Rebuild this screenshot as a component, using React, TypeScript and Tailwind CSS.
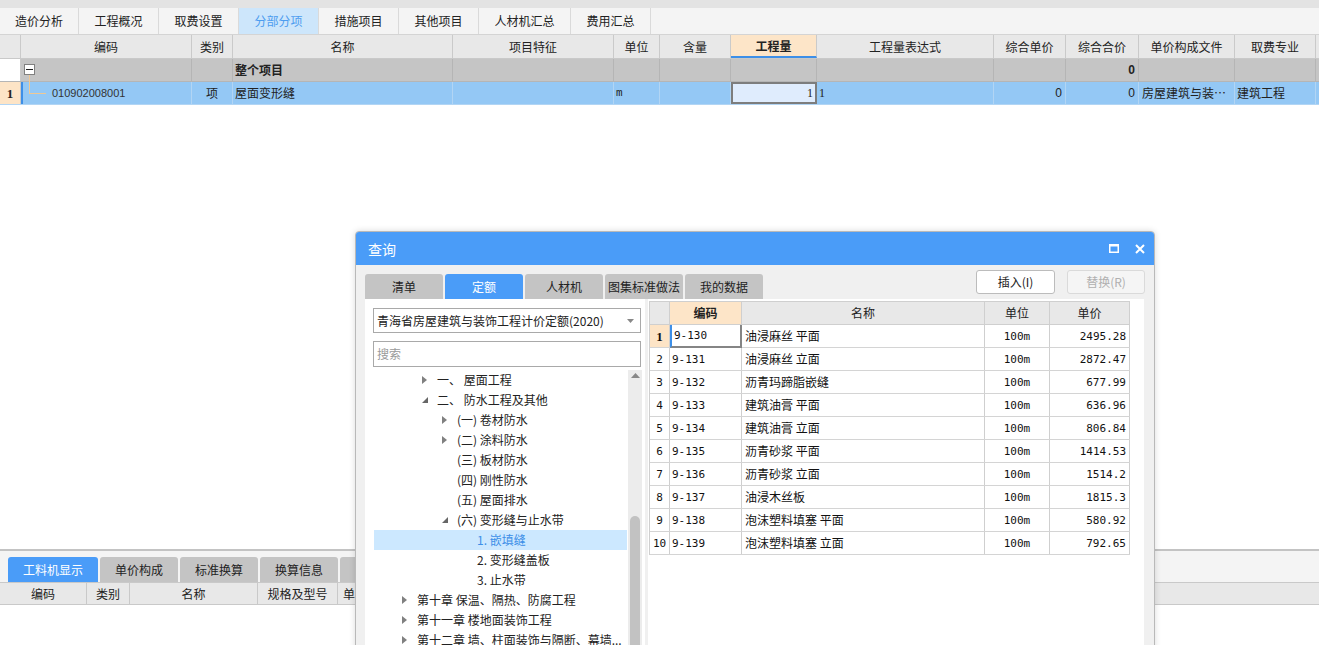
import React from 'react';

const topTabs = [
  { label: '造价分析', w: 'w-[79px]' },
  { label: '工程概况', w: 'w-[80px]' },
  { label: '取费设置', w: 'w-[80px]' },
  { label: '分部分项', w: 'w-[80px]', active: true },
  { label: '措施项目', w: 'w-[80px]' },
  { label: '其他项目', w: 'w-[80px]' },
  { label: '人材机汇总', w: 'w-[92px]' },
  { label: '费用汇总', w: 'w-[80px]' },
];

const cols = [
  { w: 'w-[21px]', t: '' },
  { w: 'w-[171px]', t: '编码' },
  { w: 'w-[41px]', t: '类别' },
  { w: 'w-[220px]', t: '名称' },
  { w: 'w-[161px]', t: '项目特征' },
  { w: 'w-[46px]', t: '单位' },
  { w: 'w-[71px]', t: '含量' },
  { w: 'w-[86px]', t: '工程量', hl: true },
  { w: 'w-[177px]', t: '工程量表达式' },
  { w: 'w-[72px]', t: '综合单价' },
  { w: 'w-[73px]', t: '综合合价' },
  { w: 'w-[96px]', t: '单价构成文件' },
  { w: 'w-[81px]', t: '取费专业' },
];

const quotas = [
  ['9-130', '油浸麻丝 平面', '2495.28'],
  ['9-131', '油浸麻丝 立面', '2872.47'],
  ['9-132', '沥青玛蹄脂嵌缝', '677.99'],
  ['9-133', '建筑油膏 平面', '636.96'],
  ['9-134', '建筑油膏 立面', '806.84'],
  ['9-135', '沥青砂浆 平面', '1414.53'],
  ['9-136', '沥青砂浆 立面', '1514.2'],
  ['9-137', '油浸木丝板', '1815.3'],
  ['9-138', '泡沫塑料填塞 平面', '580.92'],
  ['9-139', '泡沫塑料填塞 立面', '792.65'],
];

type TreeItem = { pl: string; arrow?: 'right' | 'down'; text: string; sel?: boolean };

const tree: TreeItem[] = [
  { pl: 'pl-[48px]', arrow: 'right', text: '一、 屋面工程' },
  { pl: 'pl-[48px]', arrow: 'down', text: '二、 防水工程及其他' },
  { pl: 'pl-[68px]', arrow: 'right', text: '(一) 卷材防水' },
  { pl: 'pl-[68px]', arrow: 'right', text: '(二) 涂料防水' },
  { pl: 'pl-[68px]', text: '(三) 板材防水' },
  { pl: 'pl-[68px]', text: '(四) 刚性防水' },
  { pl: 'pl-[68px]', text: '(五) 屋面排水' },
  { pl: 'pl-[68px]', arrow: 'down', text: '(六) 变形缝与止水带' },
  { pl: 'pl-[88px]', text: '1. 嵌填缝', sel: true },
  { pl: 'pl-[88px]', text: '2. 变形缝盖板' },
  { pl: 'pl-[88px]', text: '3. 止水带' },
  { pl: 'pl-[28px]', arrow: 'right', text: '第十章 保温、隔热、防腐工程' },
  { pl: 'pl-[28px]', arrow: 'right', text: '第十一章 楼地面装饰工程' },
  { pl: 'pl-[28px]', arrow: 'right', text: '第十二章 墙、柱面装饰与隔断、幕墙...' },
];

const Arrow = ({ dir }: { dir?: 'right' | 'down' }) => (
  <span className="w-[15px] shrink-0 flex items-center">
    {dir === 'right' && (
      <svg width="5" height="8" viewBox="0 0 5 8">
        <path d="M0 0 L5 4 L0 8 Z" fill="#808080" />
      </svg>
    )}
    {dir === 'down' && (
      <svg width="6" height="6" viewBox="0 0 6 6">
        <path d="M6 0 L6 6 L0 6 Z" fill="#666" />
      </svg>
    )}
  </span>
);

const App: React.FC = () => {
  return (
    <div className="relative w-[1319px] h-[645px] overflow-hidden bg-white flex flex-col text-[12px] text-[#222] font-['Noto_Sans_CJK_SC','Noto_Sans',sans-serif] leading-none">
      {/* top strip */}
      <div className="h-[8px] shrink-0 bg-[#e3e3e3]" />

      {/* main tabs */}
      <div className="h-[27px] shrink-0 flex bg-[#f4f4f4] border-b border-[#d4d4d4]">
        {topTabs.map(t => (
          <div
            key={t.label}
            className={`${t.w} shrink-0 flex items-center justify-center border-r border-[#dadada] ${t.active ? 'bg-[#cde6fb] text-[#4d9df0]' : 'text-[#222]'}`}
          >
            {t.label}
          </div>
        ))}
      </div>

      {/* table header */}
      <div className="h-[24px] shrink-0 flex bg-[#e8e8e8] border-b border-[#c9c9c9]">
        {cols.map((c, i) => (
          <div
            key={i}
            className={`${c.w} shrink-0 flex items-center justify-center border-r border-[#cacaca] text-[12px] ${c.hl ? 'bg-[#fde5c8] font-bold border-b-2 border-b-[#3d8fe8]' : ''}`}
          >
            {c.t}
          </div>
        ))}
        <div className="flex-1" />
      </div>

      {/* group row */}
      <div className="h-[23px] shrink-0 flex bg-[#c5c5c5] border-b border-[#b5b5b5]">
        <div className="w-[21px] shrink-0 bg-white border-r border-[#c9c9c9]" />
        <div className="w-[171px] shrink-0 border-r border-[#b5b5b5] relative">
          <div className="absolute left-[3px] top-[5px] w-[11px] h-[11px] bg-white border border-[#808080] flex items-center justify-center">
            <div className="w-[7px] h-[1px] bg-[#222]" />
          </div>
          <div className="absolute left-[8px] top-[16px] w-[1px] h-[18px] bg-[#efc894]" />
        </div>
        <div className="w-[41px] shrink-0 border-r border-[#b5b5b5]" />
        <div className="w-[220px] shrink-0 border-r border-[#b5b5b5] flex items-center pl-[2px] font-bold">整个项目</div>
        <div className="w-[161px] shrink-0 border-r border-[#b5b5b5]" />
        <div className="w-[46px] shrink-0 border-r border-[#b5b5b5]" />
        <div className="w-[71px] shrink-0 border-r border-[#b5b5b5]" />
        <div className="w-[86px] shrink-0 border-r border-[#b5b5b5]" />
        <div className="w-[177px] shrink-0 border-r border-[#b5b5b5]" />
        <div className="w-[72px] shrink-0 border-r border-[#b5b5b5]" />
        <div className="w-[73px] shrink-0 border-r border-[#b5b5b5] flex items-center justify-end pr-[3px] font-bold font-['Liberation_Sans',sans-serif]">0</div>
        <div className="w-[96px] shrink-0 border-r border-[#b5b5b5]" />
        <div className="w-[81px] shrink-0 border-r border-[#b5b5b5]" />
        <div className="flex-1" />
      </div>

      {/* item row */}
      <div className="h-[23px] shrink-0 flex bg-[#94c8f5] border-b border-[#b2d5f4]">
        <div className="w-[21px] shrink-0 bg-[#fde4c6] border-r border-[#c9c9c9] flex items-center justify-center font-bold font-['Liberation_Serif',serif] text-[13px]">1</div>
        <div className="w-[171px] shrink-0 border-r border-[#b2d5f4] border-l-2 border-l-[#3d8fe8] relative flex items-center">
          <div className="absolute left-[6px] top-0 w-[1px] h-[11px] bg-[#efc894]" />
          <div className="absolute left-[6px] top-[11px] w-[17px] h-[1px] bg-[#efc894]" />
          <span className="pl-[29px] font-['Liberation_Sans',sans-serif] text-[11px] text-[#333]">010902008001</span>
        </div>
        <div className="w-[41px] shrink-0 border-r border-[#b2d5f4] flex items-center justify-center">项</div>
        <div className="w-[220px] shrink-0 border-r border-[#b2d5f4] flex items-center pl-[2px]">屋面变形缝</div>
        <div className="w-[161px] shrink-0 border-r border-[#b2d5f4]" />
        <div className="w-[46px] shrink-0 border-r border-[#b2d5f4] flex items-center pl-[2px] text-[11px] font-['Liberation_Mono',monospace]">m</div>
        <div className="w-[71px] shrink-0 border-r border-[#b2d5f4]" />
        <div className="w-[86px] shrink-0 bg-[#dfecfd] border-2 border-[#7d7d7d] flex items-center justify-end pr-[2px] font-['Liberation_Serif',serif] text-[12px]">1</div>
        <div className="w-[177px] shrink-0 border-r border-[#b2d5f4] flex items-center pl-[2px] font-['Liberation_Serif',serif] text-[12px]">1</div>
        <div className="w-[72px] shrink-0 border-r border-[#b2d5f4] flex items-center justify-end pr-[3px] font-['Liberation_Sans',sans-serif]">0</div>
        <div className="w-[73px] shrink-0 border-r border-[#b2d5f4] flex items-center justify-end pr-[3px] font-['Liberation_Sans',sans-serif]">0</div>
        <div className="w-[96px] shrink-0 border-r border-[#b2d5f4] flex items-center pl-[3px] whitespace-nowrap">房屋建筑与装…</div>
        <div className="w-[81px] shrink-0 border-r border-[#b2d5f4] flex items-center pl-[2px]">建筑工程</div>
        <div className="flex-1" />
      </div>

      <div className="flex-1" />

      {/* bottom panel */}
      <div className="h-[96px] shrink-0 flex flex-col border-t-2 border-[#c3c3c3]">
        <div className="h-[31px] shrink-0 bg-[#f4f4f4] flex items-end pl-[8px] gap-[2px]">
          <div className="w-[90px] h-[25px] rounded-t-[3px] bg-[#4a9cf8] text-white flex items-center justify-center">工料机显示</div>
          <div className="w-[78px] h-[25px] rounded-t-[3px] bg-[#c4c4c4] flex items-center justify-center">单价构成</div>
          <div className="w-[78px] h-[25px] rounded-t-[3px] bg-[#c4c4c4] flex items-center justify-center">标准换算</div>
          <div className="w-[78px] h-[25px] rounded-t-[3px] bg-[#c4c4c4] flex items-center justify-center">换算信息</div>
          <div className="w-[78px] h-[25px] rounded-t-[3px] bg-[#c4c4c4]" />
        </div>
        <div className="h-[23px] shrink-0 flex bg-[#e8e8e8] border-y border-[#c9c9c9]">
          <div className="w-[87px] shrink-0 border-r border-[#c9c9c9] flex items-center justify-center">编码</div>
          <div className="w-[43px] shrink-0 border-r border-[#c9c9c9] flex items-center justify-center">类别</div>
          <div className="w-[128px] shrink-0 border-r border-[#c9c9c9] flex items-center justify-center">名称</div>
          <div className="w-[80px] shrink-0 border-r border-[#c9c9c9] flex items-center justify-center">规格及型号</div>
          <div className="w-[60px] shrink-0 border-r border-[#c9c9c9] flex items-center pl-[5px]">单位</div>
          <div className="flex-1" />
        </div>
        <div className="flex-1 bg-white" />
      </div>

      {/* query dialog */}
      <div className="absolute left-[355px] top-[231px] w-[800px] h-[420px] flex flex-col bg-[#f0f0f0] border border-[#b9b9b9] rounded-t-[4px] shadow-[0_0_6px_rgba(0,0,0,0.15)]">
        <div className="h-[33px] shrink-0 bg-[#4a9cf8] rounded-t-[3px] flex items-center pl-[12px] pr-[9px] text-white text-[14px]">
          <span>查询</span>
          <div className="ml-auto flex items-center gap-[16px]">
            <svg width="10" height="9" viewBox="0 0 10 9">
              <rect x="0.75" y="1" width="8.5" height="7.25" fill="none" stroke="white" strokeWidth="1.5" />
              <rect x="0" y="0" width="10" height="2.5" fill="white" />
            </svg>
            <svg width="10" height="10" viewBox="0 0 10 10">
              <path d="M1 1 L9 9 M9 1 L1 9" stroke="white" strokeWidth="2" />
            </svg>
          </div>
        </div>

        {/* tabs + buttons */}
        <div className="h-[34px] shrink-0 flex pl-[9px] pr-[9px] pt-[5px]">
          <div className="flex items-end gap-[2px]">
            <div className="w-[78px] h-[25px] rounded-t-[3px] bg-[#c4c4c4] flex items-center justify-center">清单</div>
            <div className="w-[78px] h-[25px] rounded-t-[3px] bg-[#4a9cf8] text-white flex items-center justify-center">定额</div>
            <div className="w-[78px] h-[25px] rounded-t-[3px] bg-[#c4c4c4] flex items-center justify-center">人材机</div>
            <div className="w-[78px] h-[25px] rounded-t-[3px] bg-[#c4c4c4] flex items-center justify-center">图集标准做法</div>
            <div className="w-[78px] h-[25px] rounded-t-[3px] bg-[#c4c4c4] flex items-center justify-center">我的数据</div>
          </div>
          <div className="ml-auto flex items-start gap-[12px]">
            <div className="w-[79px] h-[24px] bg-white border border-[#bcbcbc] rounded-[3px] flex items-center justify-center">插入(I)</div>
            <div className="w-[78px] h-[24px] bg-[#f5f5f5] border border-[#dadada] rounded-[3px] flex items-center justify-center text-[#b0b0b0]">替换(R)</div>
          </div>
        </div>

        {/* panels */}
        <div className="flex-1 flex pl-[9px] pr-[9px] gap-[3px] min-h-0">
          {/* left: quota library tree */}
          <div className="w-[280px] shrink-0 bg-white flex flex-col">
            <div className="mt-[9px] ml-[8px] w-[268px] h-[25px] border border-[#a9a9a9] flex items-center pl-[3px] pr-[6px]">
              <span className="text-[#222]">青海省房屋建筑与装饰工程计价定额(2020)</span>
              <svg className="ml-auto" width="7" height="4" viewBox="0 0 7 4">
                <path d="M0 0 L7 0 L3.5 4 Z" fill="#888" />
              </svg>
            </div>
            <div className="mt-[8px] ml-[8px] w-[268px] h-[26px] border border-[#a9a9a9] flex items-center pl-[3px] text-[#9a9a9a]">搜索</div>
            <div className="mt-[3px] flex flex-1 min-h-0">
              <div className="ml-[9px] w-[253px] flex flex-col">
                {tree.map((n, i) => (
                  <div
                    key={i}
                    className={`h-[20px] shrink-0 flex items-center whitespace-nowrap leading-[20px] ${n.pl} ${n.sel ? 'bg-[#cce8ff] text-[#3d8fe8]' : ''}`}
                  >
                    {n.pl !== 'pl-[88px]' && <Arrow dir={n.arrow} />}
                    {n.pl === 'pl-[88px]' && <span className="w-[15px] shrink-0" />}
                    <span>{n.text}</span>
                  </div>
                ))}
              </div>
              <div className="ml-[1px] w-[14px] bg-[#ececec] flex flex-col items-center">
                <svg className="mt-[3px]" width="9" height="5" viewBox="0 0 9 5">
                  <path d="M0 5 L4.5 0 L9 5 Z" fill="#888" />
                </svg>
                <div className="mt-[138px] w-[10px] flex-1 rounded-t-[5px] bg-[#c2c2c2]" />
              </div>
            </div>
          </div>

          {/* right: quota list */}
          <div className="w-[496px] shrink-0 bg-white">
            <div className="mt-[2px] ml-[1px] w-[481px] border-l border-t border-[#cfcfcf]">
              <div className="h-[23px] flex bg-[#e8e8e8] border-b border-[#cfcfcf]">
                <div className="w-[20px] shrink-0 border-r border-[#cfcfcf]" />
                <div className="w-[72px] shrink-0 border-r border-[#cfcfcf] bg-[#fde5c8] font-bold flex items-center justify-center">编码</div>
                <div className="w-[243px] shrink-0 border-r border-[#cfcfcf] flex items-center justify-center">名称</div>
                <div className="w-[65px] shrink-0 border-r border-[#cfcfcf] flex items-center justify-center">单位</div>
                <div className="w-[80px] shrink-0 border-r border-[#cfcfcf] flex items-center justify-center">单价</div>
              </div>
              {quotas.map((q, i) => (
                <div key={q[0]} className="h-[23px] flex border-b border-[#d4d4d4] font-['DejaVu_Sans_Mono','Noto_Sans_CJK_SC',monospace] text-[11px] text-[#111]">
                  <div
                    className={`w-[20px] shrink-0 border-r border-[#cfcfcf] flex items-center justify-center ${i === 0 ? 'bg-[#fde4c6] font-bold font-[\'Liberation_Serif\',serif] text-[13px]' : ''}`}
                  >
                    {i + 1}
                  </div>
                  <div
                    className={`w-[72px] shrink-0 flex items-center pl-[2px] ${i === 0 ? 'border-l-2 border-l-[#3d8fe8] border-r-2 border-r-[#858585] border-b-2 border-b-[#858585] -mb-[1px]' : 'border-r border-[#cfcfcf]'}`}
                  >
                    {q[0]}
                  </div>
                  <div className="w-[243px] shrink-0 border-r border-[#cfcfcf] flex items-center pl-[3px] whitespace-pre font-['Noto_Sans_CJK_SC',sans-serif] text-[12px]">{q[1]}</div>
                  <div className="w-[65px] shrink-0 border-r border-[#cfcfcf] flex items-center justify-center">100m</div>
                  <div className="w-[80px] shrink-0 border-r border-[#cfcfcf] flex items-center justify-end pr-[3px]">{q[2]}</div>
                </div>
              ))}
            </div>
          </div>
        </div>
      </div>
    </div>
  );
};

export default App;
